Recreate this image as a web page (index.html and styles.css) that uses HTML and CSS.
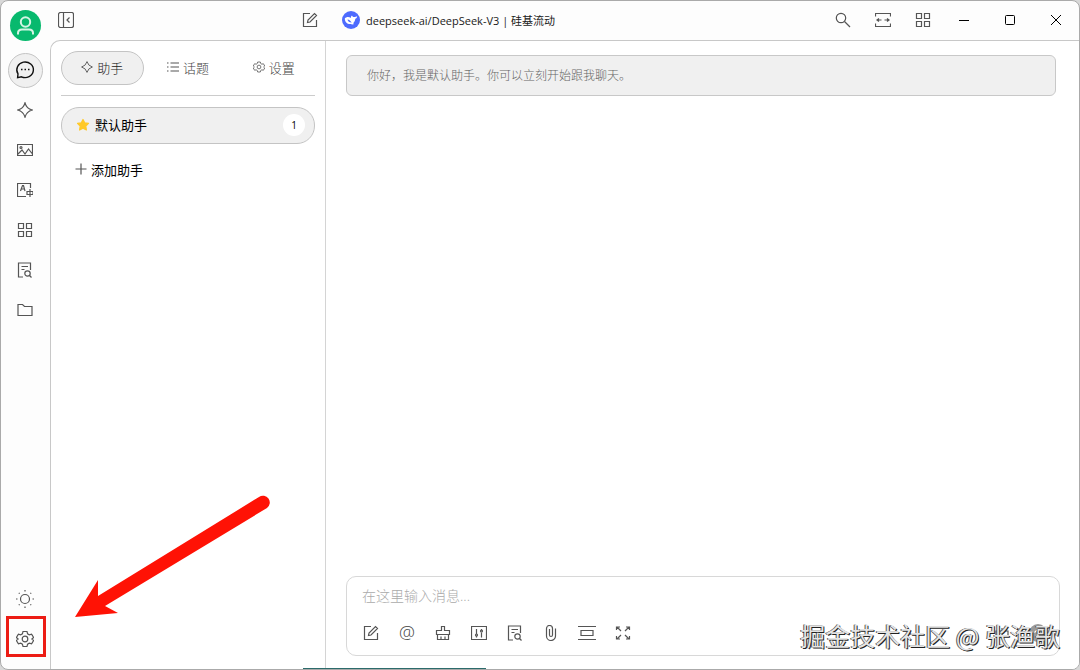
FILE: index.html
```html
<!DOCTYPE html>
<html lang="zh-CN">
<head>
  <meta charset="UTF-8">
  <title>Cherry Studio</title>
  <link rel="stylesheet" href="styles.css">
</head>
<body>
  <!-- 公共图标 -->
  <svg class="sprite" aria-hidden="true">
    <symbol id="i-spark" viewBox="0 0 16 16"><path d="M8 .8Q9.500 6.500 15.200 8 9.500 9.500 8 15.200 6.500 9.500.8 8 6.500 6.500 8 .8z"/></symbol>
    <symbol id="i-grid" viewBox="0 0 16 16"><path d="M1.500 1.500h5v5h-5zM9.500 1.500h5v5h-5zM1.500 9.500h5v5h-5zM9.500 9.500h5v5h-5z"/></symbol>
    <symbol id="i-edit" viewBox="0 0 16 16"><path d="M8 1.500H1.500v13h13V8M5.500 10.500l.5-2.500 6.500-6.500 2 2L8 10z"/></symbol>
    <symbol id="i-doc" viewBox="0 0 16 16"><path d="M6 15H1.500V1h12v7M4.500 4.500h6.500M4.500 7.500h3"/><circle cx="10.500" cy="11.500" r="2.700"/><path d="M12.500 13.500l2 2"/></symbol>
    <symbol id="i-gear" viewBox="0 0 18 18"><path d="M7 1.500h4l.6 2.300 1.700 1 2.300-.7 2 3.400L15.900 9l1.700 1.500-2 3.400-2.300-.7-1.700 1-.6 2.300H7l-.6-2.300-1.700-1-2.300.7-2-3.400L2.100 9 .4 7.500l2-3.400 2.300.7 1.700-1z"/><circle cx="9" cy="9" r="2.800"/></symbol>
  </svg>

  <div class="window">
    <nav class="rail">
      <button class="avatar" title="用户"><svg viewBox="0 0 31 31"><circle cx="15.500" cy="12" r="4.700"/><path d="M8 24.500v-1.500q0-3.500 4-3.500h7q4 0 4 3.500v1.500"/></svg></button>
      <div class="rail-list">
        <button class="rail-btn active" title="对话"><svg viewBox="0 0 20 20"><path d="M2.600 17.600L3 13.800A8.300 7.800 0 1 1 6.500 16.800z"/><path d="M6 9.500h1.500M9.500 9.500h1.500M13 9.500h1.500"/></svg></button>
        <button class="rail-btn" title="助手"><svg><use href="#i-spark"/></svg></button>
        <button class="rail-btn" title="绘画"><svg viewBox="0 0 16 16"><path d="M.5 2.500h15v11H.5zM1 12l4-4 3 4 3.500-5L15 11.500"/><circle cx="4" cy="5.500" r="1"/></svg></button>
        <button class="rail-btn" title="翻译"><svg viewBox="0 0 16 16"><path d="M13.500 6V1.500H.5v13H9M3.500 9l2-5.500h1L8 9M4 7h3.500M10 9.500h6v3h-6zM13 7v8"/></svg></button>
        <button class="rail-btn" title="小程序"><svg><use href="#i-grid"/></svg></button>
        <button class="rail-btn" title="知识库"><svg><use href="#i-doc"/></svg></button>
        <button class="rail-btn" title="文件"><svg viewBox="0 0 16 16"><path d="M1 2.500h4.500L7.500 4.500H15v9H1z"/></svg></button>
      </div>
      <div class="rail-list bottom">
        <button class="rail-btn" title="主题"><svg class="big" viewBox="0 0 18 18"><circle cx="9" cy="9" r="4.500"/><path d="M9 0v1.500M9 16.500V18M0 9h1.500M16.500 9H18M2.800 2.800l.8.8M14.400 14.400l.8.8M2.800 15.200l.8-.8M14.400 3.600l.8-.8"/></svg></button>
        <button class="rail-btn marked" title="设置"><svg class="big"><use href="#i-gear"/></svg></button>
      </div>
    </nav>

    <div class="app">
      <header class="header">
        <div class="header-side">
          <button title="收起侧栏"><svg viewBox="0 0 16 16"><rect x=".5" y=".5" width="15" height="15" rx="2"/><path d="M5.500 1v14M11.500 5.500L9 8l2.500 2.500"/></svg></button>
          <button title="新建话题"><svg><use href="#i-edit"/></svg></button>
        </div>
        <button class="model">
          <svg class="model-logo" viewBox="0 0 18 18"><circle cx="9" cy="9" r="9"/><path d="M2.800 7.500c1.500-1.800 4-2 6.200-.5-.3-1 .2-2 1-2.500.3 1 1.200 1.600 2.200 1.500 1.200 0 2-.6 3-.8-.2 1.400-.9 2.300-1.900 2.600-.2 2.100-1.200 3.600-2.300 4.400l1.200.9c-1.400.7-2.600.5-3.600 0-3.500.2-5.800-2.300-5.800-5.600z"/><path class="cut" d="M5.500 8.500c2 .1 3.100 1.600 4.200 3-2.200.1-3.800-1.200-4.200-3z"/></svg>
          deepseek-ai/DeepSeek-V3 | 硅基流动
        </button>
        <div class="header-tools">
          <button title="搜索"><svg viewBox="0 0 16 16"><circle cx="6" cy="6" r="4.700"/><path d="M9.500 9.500l5.500 5.500"/></svg></button>
          <button title="宽屏"><svg viewBox="0 0 16 16"><path d="M.5 4.500v-3h15v3M.5 11.500v3h15v-3M2 8h4.500M9.500 8H14M4 6.500L2 8l2 1.500M12 6.500l2 1.500-2 1.500"/></svg></button>
          <button title="小程序"><svg><use href="#i-grid"/></svg></button>
        </div>
        <div class="win-controls">
          <button title="最小化"><svg viewBox="0 0 10 10"><path d="M0 5.500h10"/></svg></button>
          <button title="最大化"><svg viewBox="0 0 10 10"><rect x=".5" y=".5" width="9" height="9" rx="1"/></svg></button>
          <button title="关闭"><svg viewBox="0 0 10 10"><path d="M0 0l10 10M10 0L0 10"/></svg></button>
        </div>
      </header>

      <div class="content">
        <aside class="sidebar">
          <div class="tabs">
            <button class="active"><svg><use href="#i-spark"/></svg>助手</button>
            <button><svg viewBox="0 0 12 12"><path d="M0 2h1.500M3.500 2H12M0 6h1.500M3.500 6H12M0 10h1.500M3.500 10H12"/></svg>话题</button>
            <button><svg><use href="#i-gear"/></svg>设置</button>
          </div>
          <button class="assistant">
            <svg class="star" viewBox="0 0 14 14"><path d="M7 1.500l1.700 3.300 3.800.6-2.700 2.700.6 3.900L7 10.300 3.600 12l.6-3.900L1.500 5.400l3.800-.6z"/></svg>
            默认助手
            <span class="count">1</span>
          </button>
          <button class="add"><svg viewBox="0 0 12 12"><path d="M6 .5v11M.5 6h11"/></svg>添加助手</button>
        </aside>

        <main class="chat">
          <div class="prompt">你好，我是默认助手。你可以立刻开始跟我聊天。</div>
          <div class="inputbar">
            <textarea rows="1" aria-label="消息" placeholder="在这里输入消息..."></textarea>
            <div class="tools">
              <button title="新话题"><svg><use href="#i-edit"/></svg></button>
              <button title="提及" class="at">@</button>
              <button title="清空"><svg viewBox="0 0 16 16"><path d="M6.500 5.500v-4h3v4h5v4h-13v-4zM2.500 9.500v5h11v-5M6 14v-2.500M10 14v-2.500"/></svg></button>
              <button title="参数"><svg viewBox="0 0 16 16"><path d="M.5 1.500h15v13H.5zM5.500 4v5M5.500 11v1.500M10.500 4v1.500M10.500 7.500v5"/><circle cx="5.500" cy="10" r="1"/><circle cx="10.500" cy="6" r="1"/></svg></button>
              <button title="知识库"><svg><use href="#i-doc"/></svg></button>
              <button title="附件"><svg viewBox="0 0 16 16"><path d="M12.500 3.500V11a4.500 4.500 0 0 1-9 0V3.500a3 3 0 0 1 6 0V10a1.500 1.500 0 0 1-3 0V4"/></svg></button>
              <button title="清除上下文"><svg class="big" viewBox="0 0 18 18"><path d="M0 2.500h18M0 15.500h18M3 6.500h12v5H3z"/></svg></button>
              <button title="展开"><svg viewBox="0 0 16 16"><path d="M1.500 5V2H5M2 2l4 4M11 2h3.500v3M14 2l-4 4M1.500 11v3H5M2 14l4-4M14.500 11v3H11M14 14l-4-4"/></svg></button>
              <span class="spacer"></span>
              <button title="翻译"><svg viewBox="0 0 16 16"><path d="M2 6h12v5H2zM8 3v11"/></svg></button>
              <button title="发送" class="send"><svg viewBox="0 0 20 20"><circle cx="10" cy="10" r="9"/><path d="M10 15V6M6.500 9.500L10 6l3.500 3.500"/></svg></button>
            </div>
          </div>
        </main>
      </div>
    </div>
  </div>

  <svg class="arrow" viewBox="0 0 200 130" aria-hidden="true"><path d="M0 128L23 91V107L184 8A6.500 6.500 0 0 1 192 19L30 117 43 124z"/></svg>
  <div class="watermark">掘金技术社区 @ 张渔歌</div>
</body>
</html>
```
FILE: styles.css
```css
* { box-sizing: border-box; }
body { margin: 0; background: #d8d8d8; color: #1a1a1a; font-family: "Open Sans", "Noto Sans CJK SC", sans-serif; font-size: 13px; }
button { display: flex; align-items: center; justify-content: center; background: none; border: none; padding: 0; margin: 0; color: inherit; font: inherit; cursor: pointer; }
svg { width: 16px; height: 16px; flex: none; fill: none; stroke: #555; stroke-width: 1.2; }
svg.big { width: 18px; height: 18px; }
.sprite { position: absolute; width: 0; height: 0; }

/* 窗口 */
.window { position: relative; display: flex; height: 100vh; background: #fdfdfd; border: 1px solid #aaa; border-radius: 8px; overflow: hidden; }
.window::after { content: ""; position: absolute; bottom: -1px; left: 28%; width: 17%; height: 2px; background: #2c6b6b; }
.app { flex: 1; min-width: 0; display: flex; flex-direction: column; }

/* 左侧图标栏 */
.rail { width: 49px; display: flex; flex-direction: column; align-items: center; padding: 9px 0 12px; }
.avatar { width: 31px; height: 31px; border-radius: 50%; background: #08b96e; margin-bottom: 12px; }
.avatar svg { width: 31px; height: 31px; stroke: #d5f5e5; stroke-width: 2; }
.rail-list { display: flex; flex-direction: column; gap: 5px; }
.rail-list.bottom { margin-top: auto; }
.rail-btn { position: relative; width: 35px; height: 35px; padding: 0 2px 1px 0; border-radius: 50%; }
.rail-btn.active { background: #f0f0f0; border: 1px solid #c4c4c4; }
.rail-btn.active svg { width: 20px; height: 20px; stroke: #111; stroke-width: 1.4; }
.rail-btn.marked::after { content: ""; position: absolute; inset: -6px -3px 0 -2px; border: 3px solid #ec1c14; }

/* 顶栏 */
.header { height: 39px; display: flex; align-items: center; padding-bottom: 2px; }
.header-side { width: 275px; display: flex; justify-content: space-between; padding: 0 7px 0 8px; }
.model { gap: 6px; margin-left: 17px; font-size: 11px; }
.model-logo { width: 18px; height: 18px; fill: #fff; stroke: none; }
.model-logo circle, .model-logo .cut { fill: #4d6bfe; }
.header-tools { display: flex; gap: 24px; margin-left: auto; margin-right: 10px; }
.win-controls { display: flex; }
.win-controls button { width: 46px; height: 36px; }
.win-controls svg { width: 10px; height: 10px; stroke: #000; stroke-width: 1; }

.content { flex: 1; min-height: 0; display: flex; border: 1px solid #c8c8c8; border-width: 1px 0 0 1px; border-top-left-radius: 10px; background: #fff; }

/* 助手列表 */
.sidebar { width: 275px; padding: 10px; border-right: 1px solid #d4d4d4; }
.tabs { display: flex; gap: 3px; padding-bottom: 10px; margin-bottom: 11px; border-bottom: 1px solid #ccc; color: #444; font-weight: 300; }
.tabs button { flex: 1; height: 34px; gap: 4px; padding-bottom: 2px; border: 1px solid transparent; border-radius: 17px; }
.tabs svg { width: 12px; height: 12px; }
.tabs .active { background: #f0f0f0; border-color: #c4c4c4; color: #222; }
.assistant { width: 100%; height: 37px; justify-content: flex-start; gap: 5px; padding: 0 9px 2px 14px; background: #f0f0f0; border: 1px solid #c4c4c4; border-radius: 18px; color: #000; }
.star { width: 14px; height: 14px; fill: #ffc928; stroke: #ffc928; stroke-linejoin: round; }
.count { width: 22px; height: 22px; margin-left: auto; border-radius: 50%; background: #fff; font-size: 10px; line-height: 22px; text-align: center; }
.add { height: 34px; margin: 8px 0 0 14px; gap: 4px; color: #000; }
.add svg { width: 12px; height: 12px; }

/* 对话区 */
.chat { flex: 1; min-width: 0; display: flex; flex-direction: column; justify-content: space-between; padding: 14px 19px 13px 20px; }
.prompt { height: 41px; margin-right: 4px; padding: 0 20px; background: #f0f0f0; border: 1px solid #c8c8c8; border-radius: 6px; color: #666; font-size: 12px; font-weight: 300; line-height: 39px; }
.inputbar { height: 80px; border: 1px solid #d8d8d8; border-radius: 10px; padding: 9px 12px 9px 14px; display: flex; flex-direction: column; justify-content: space-between; }
.inputbar textarea { display: block; width: 100%; height: 20px; padding: 0 1px; border: none; outline: none; resize: none; background: none; font: inherit; font-size: 14px; font-weight: 300; line-height: 20px; }
.inputbar textarea::placeholder { color: #aaa; }
.tools { display: flex; gap: 16px; align-items: center; height: 26px; }
.tools button { width: 20px; height: 20px; color: #444; }
.tools .at { padding-bottom: 2px; font-size: 18px; font-weight: 300; }
.spacer { flex: 1; }
.tools .send { margin-right: -1px; }
.send svg { width: 20px; height: 20px; stroke: #fff; }
.send circle { fill: #999; stroke: none; }

/* 标注 */
.arrow { position: absolute; left: 75px; bottom: 51px; width: 200px; height: 130px; fill: #ff1205; stroke: none; }
.watermark { position: absolute; right: 20px; bottom: 16px; color: #e4e4e4; font-size: 25px; line-height: 38px; font-family: "Noto Sans CJK SC", sans-serif; text-shadow: 1px 1px 0 #222, -1px 0 0 #555; }
```
